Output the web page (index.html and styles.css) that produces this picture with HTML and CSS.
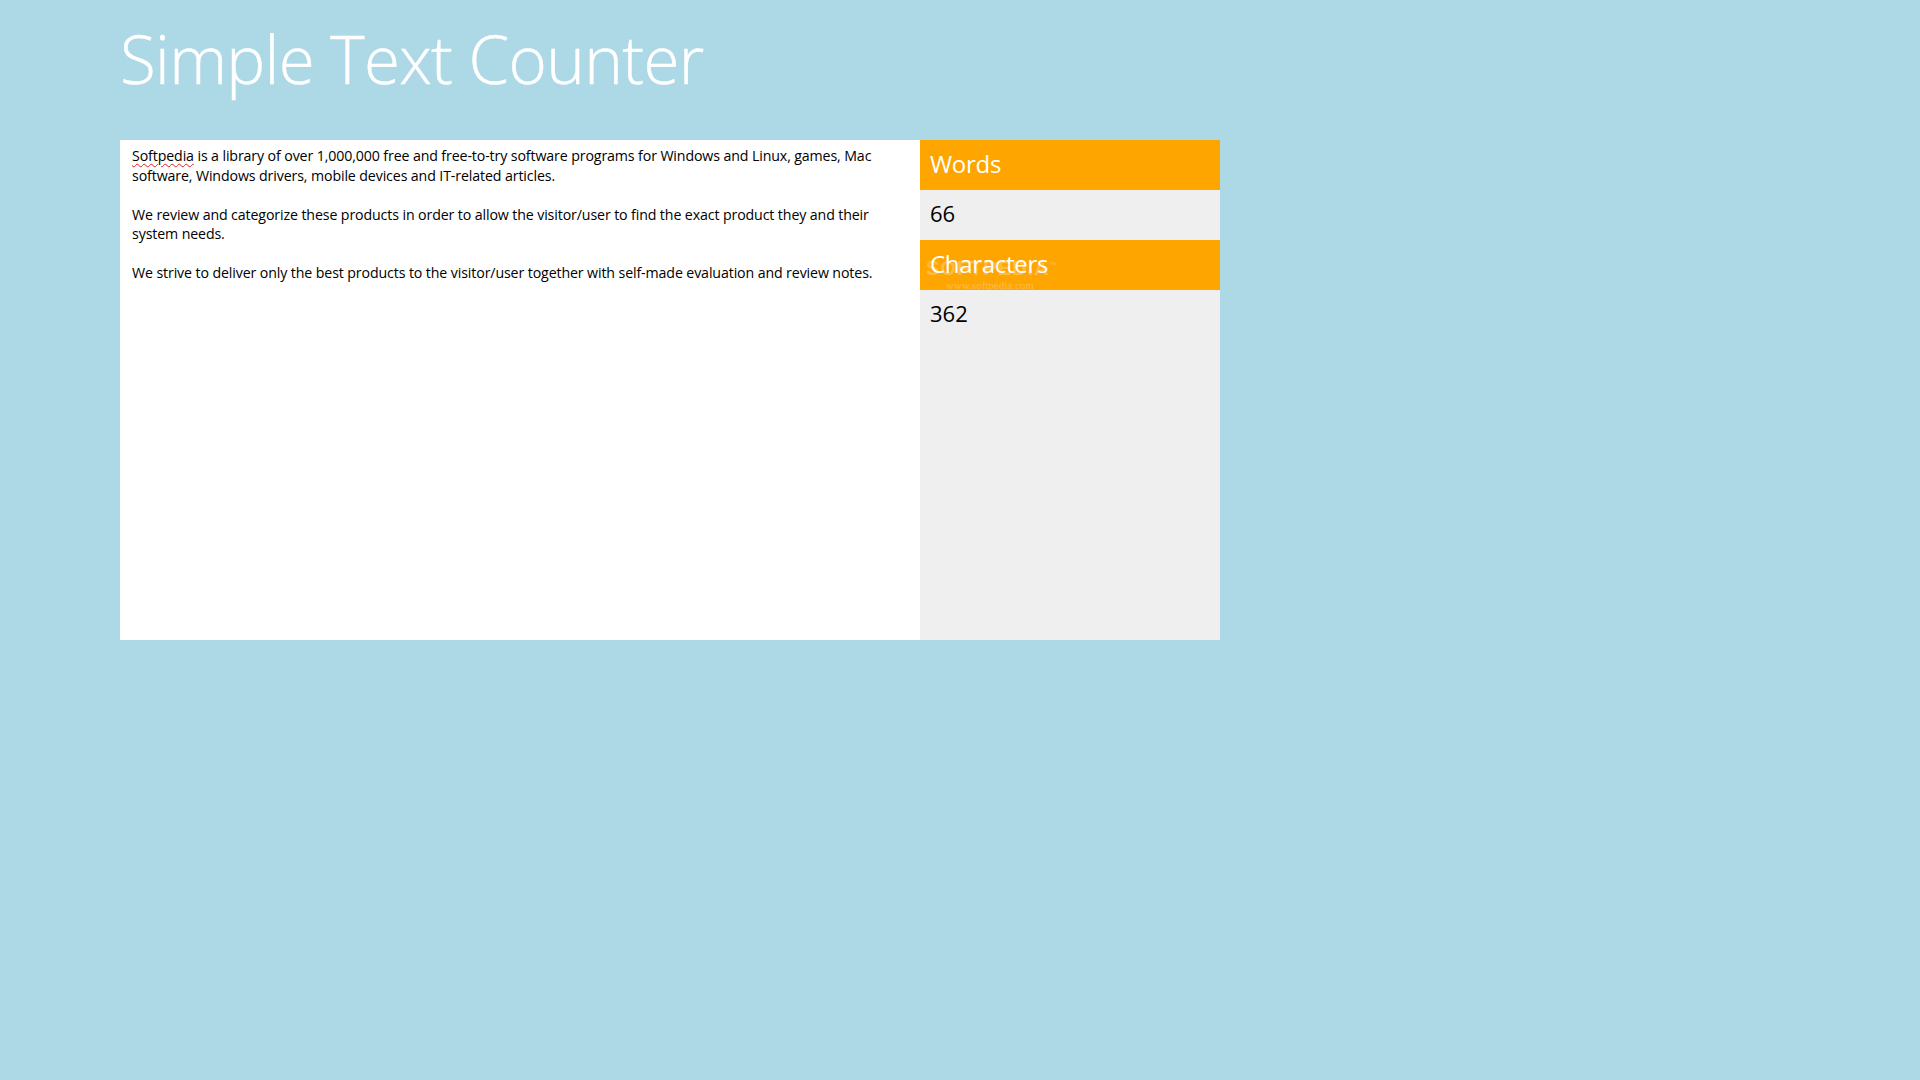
FILE: index.html
```html
<!DOCTYPE html>
<html lang="en">
<head>
<meta charset="utf-8">
<title>Simple Text Counter</title>
<link rel="stylesheet" href="styles.css">
</head>
<body>
<header class="page-header">
  <h1 class="page-title">Simple Text Counter</h1>
</header>
<main class="workspace">
  <section class="editor">
    <p><span class="misspelled">Softpedia</span> is a library of over 1,000,000 free and free-to-try software programs for Windows and Linux, games, Mac software, Windows drivers, mobile devices and IT-related articles.</p>
    <p>We review and categorize these products in order to allow the visitor/user to find the exact product they and their system needs.</p>
    <p>We strive to deliver only the best products to the visitor/user together with self-made evaluation and review notes.</p>
  </section>
  <aside class="stats">
    <div class="stat-label">Words</div>
    <div class="stat-value">66</div>
    <div class="stat-label">Characters</div>
    <div class="stat-value">362</div>
    <div class="watermark">
      <span class="wm-brand">SOFTPEDIA<sup>™</sup></span>
      <span class="wm-url">www.softpedia.com</span>
    </div>
  </aside>
</main>
</body>
</html>
```

FILE: styles.css
```css
html, body {
  margin: 0;
  padding: 0;
}

body {
  background: #add8e6;
  min-height: 1080px;
  font-family: "Open Sans", "Noto Sans", "Liberation Sans", sans-serif;
  color: #000;
}

.page-header {
  padding: 19px 0 0 120px;
  height: 140px;
  box-sizing: border-box;
}

.page-title {
  margin: 0;
  font-family: "Open Sans", "Noto Sans", sans-serif;
  font-weight: 300;
  font-size: 65.5px;
  line-height: 80px;
  color: #ffffff;
  letter-spacing: -0.7px;
  -webkit-text-stroke: 0.4px #ffffff;
}

.workspace {
  display: flex;
  margin-left: 120px;
  width: 1100px;
  height: 500px;
}

.editor {
  flex: 0 0 800px;
  box-sizing: border-box;
  background: #ffffff;
  padding: 6px 36px 6px 12px;
  font-size: 14.2px;
  line-height: 19.5px;
  letter-spacing: -0.12px;
  color: #000000;
}

.editor p {
  margin: 0 0 19.5px 0;
}

.misspelled {
  text-decoration: underline wavy #e02020;
  text-decoration-thickness: 1px;
  text-underline-offset: 2px;
}

.stats {
  position: relative;
  flex: 0 0 300px;
  background: #efefef;
  display: flex;
  flex-direction: column;
}

.stat-label {
  height: 50px;
  box-sizing: border-box;
  padding: 0 10px;
  background: #ffa500;
  color: #ffffff;
  font-size: 24px;
  line-height: 48px;
  font-weight: 400;
  letter-spacing: -0.3px;
}

.stat-value {
  height: 50px;
  box-sizing: border-box;
  padding: 0 10px;
  color: #000000;
  font-size: 22px;
  line-height: 46px;
}

.watermark {
  position: absolute;
  left: 6px;
  top: 114px;
  display: flex;
  flex-direction: column;
  align-items: flex-start;
  pointer-events: none;
  opacity: 0.25;
}

.wm-brand {
  font-family: "Liberation Sans", sans-serif;
  font-weight: 700;
  font-size: 20px;
  line-height: 22px;
  color: #ffffff;
  letter-spacing: 1px;
}

.wm-brand sup {
  font-size: 7px;
  font-weight: 400;
}

.wm-url {
  margin-left: 20px;
  font-family: "Liberation Serif", serif;
  font-size: 11px;
  line-height: 13px;
  color: #ffffff;
}
```
